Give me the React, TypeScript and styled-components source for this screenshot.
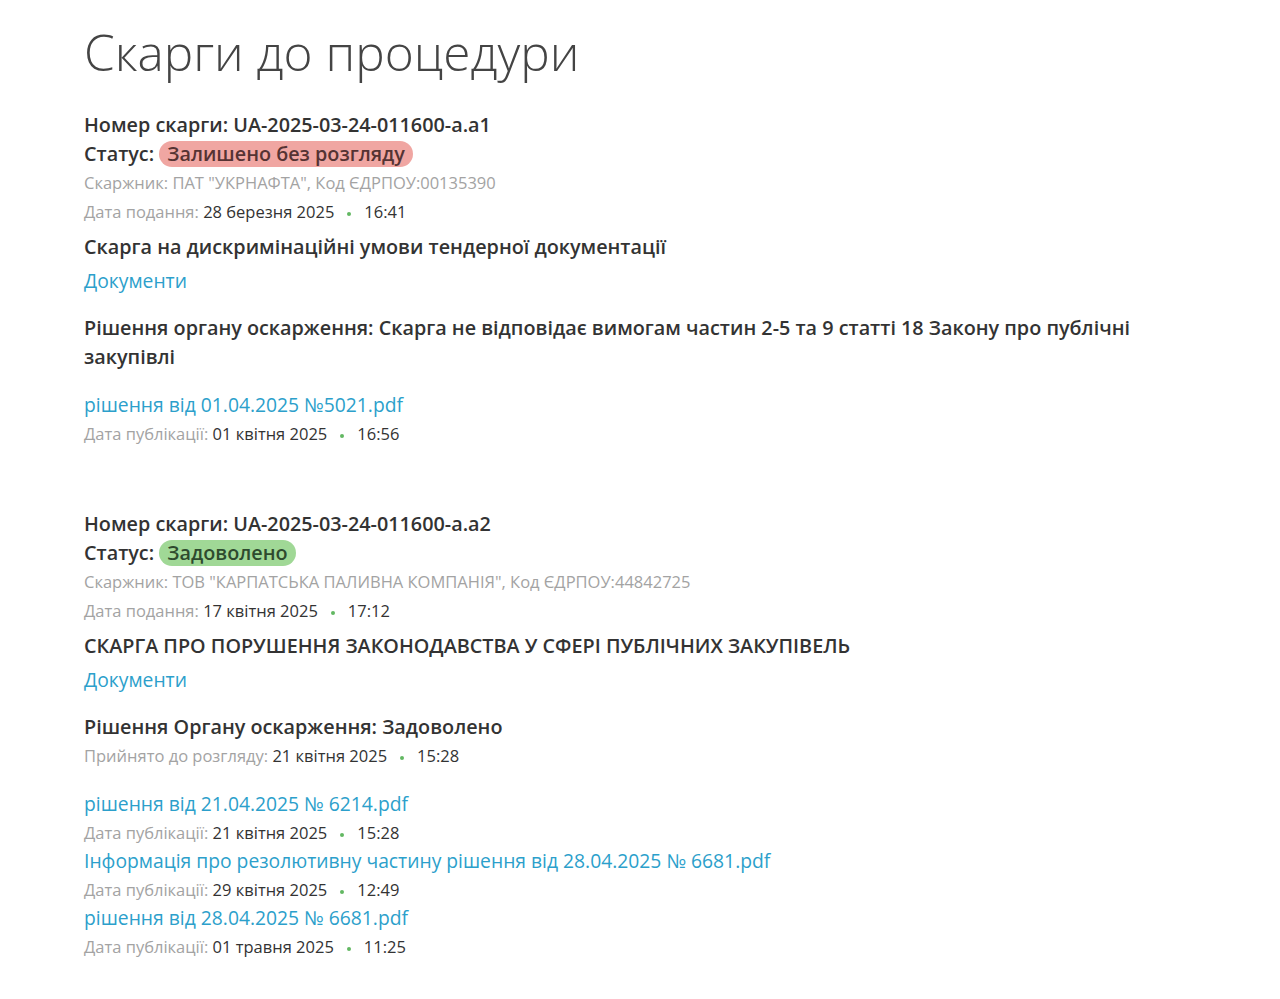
import styled, { createGlobalStyle } from 'styled-components';

const GlobalStyle = createGlobalStyle`
  body {
    margin: 0;
    background: #fff;
    font-family: 'Open Sans', 'Liberation Sans', sans-serif;
    color: #333;
  }
`;

const Page = styled.div`
  padding: 20px 84px 10px;
  max-width: 1090px;
`;

const Title = styled.h1`
  margin: 0 0 26px;
  font-size: 49.5px;
  font-weight: 300;
  line-height: 64px;
  color: #444;
`;

const Complaint = styled.section`
  margin-bottom: 61px;

  &:last-child {
    margin-bottom: 0;
  }
`;

const Heading = styled.div`
  font-size: 19.8px;
  font-weight: 600;
  line-height: 29px;
  color: #333;
`;

const Status = styled.span<{ tone: 'red' | 'green' }>`
  display: inline-block;
  padding: 0 8px;
  border-radius: 14px;
  line-height: 26px;
  background: ${(p) => (p.tone === 'red' ? '#f0a6a2' : '#a0d896')};
  color: ${(p) => (p.tone === 'red' ? '#553333' : '#2e4a2e')};
`;

const Meta = styled.div`
  font-size: 16.5px;
  line-height: 29px;
  color: #a3a3a3;
`;

const Value = styled.span`
  color: #333;
`;

const Dot = styled.span`
  display: inline-block;
  width: 4px;
  height: 4px;
  border-radius: 50%;
  background: #62b862;
  margin: 0 13px;
  vertical-align: middle;
`;

const Subject = styled(Heading)`
  margin-top: 6px;
`;

const Link = styled.a`
  display: block;
  font-size: 19.3px;
  line-height: 28px;
  color: #2c9fcb;
  text-decoration: none;
`;

const DocsLink = styled(Link)`
  margin-top: 6px;
`;

const Decision = styled(Heading)`
  margin-top: 18px;
`;

const Files = styled.div`
  margin-top: 20px;
`;

type FileItem = { name: string; date: string; time: string };

type ComplaintData = {
  number: string;
  status: string;
  tone: 'red' | 'green';
  complainant: string;
  filed: string;
  filedTime: string;
  subject: string;
  decision: string;
  accepted?: { date: string; time: string };
  files: FileItem[];
};

const complaints: ComplaintData[] = [
  {
    number: 'UA-2025-03-24-011600-a.a1',
    status: 'Залишено без розгляду',
    tone: 'red',
    complainant: 'ПАТ "УКРНАФТА", Код ЄДРПОУ:00135390',
    filed: '28 березня 2025',
    filedTime: '16:41',
    subject: 'Скарга на дискримінаційні умови тендерної документації',
    decision:
      'Рішення органу оскарження: Скарга не відповідає вимогам частин 2-5 та 9 статті 18 Закону про публічні закупівлі',
    files: [{ name: 'рішення від 01.04.2025 №5021.pdf', date: '01 квітня 2025', time: '16:56' }],
  },
  {
    number: 'UA-2025-03-24-011600-a.a2',
    status: 'Задоволено',
    tone: 'green',
    complainant: 'ТОВ "КАРПАТСЬКА ПАЛИВНА КОМПАНІЯ", Код ЄДРПОУ:44842725',
    filed: '17 квітня 2025',
    filedTime: '17:12',
    subject: 'СКАРГА ПРО ПОРУШЕННЯ ЗАКОНОДАВСТВА У СФЕРІ ПУБЛІЧНИХ ЗАКУПІВЕЛЬ',
    decision: 'Рішення Органу оскарження: Задоволено',
    accepted: { date: '21 квітня 2025', time: '15:28' },
    files: [
      { name: 'рішення від 21.04.2025 № 6214.pdf', date: '21 квітня 2025', time: '15:28' },
      {
        name: 'Інформація про резолютивну частину рішення від 28.04.2025 № 6681.pdf',
        date: '29 квітня 2025',
        time: '12:49',
      },
      { name: 'рішення від 28.04.2025 № 6681.pdf', date: '01 травня 2025', time: '11:25' },
    ],
  },
];

function DateLine({ label, date, time }: { label: string; date: string; time: string }) {
  return (
    <Meta>
      {label}: <Value>{date}</Value>
      <Dot />
      <Value>{time}</Value>
    </Meta>
  );
}

export default function App() {
  return (
    <>
      <GlobalStyle />
      <Page>
        <Title>Скарги до процедури</Title>
        {complaints.map((c) => (
          <Complaint key={c.number}>
            <Heading>Номер скарги: {c.number}</Heading>
            <Heading>
              Статус: <Status tone={c.tone}>{c.status}</Status>
            </Heading>
            <Meta>Скаржник: {c.complainant}</Meta>
            <DateLine label="Дата подання" date={c.filed} time={c.filedTime} />
            <Subject>{c.subject}</Subject>
            <DocsLink href="#">Документи</DocsLink>
            <Decision>{c.decision}</Decision>
            {c.accepted && (
              <DateLine label="Прийнято до розгляду" date={c.accepted.date} time={c.accepted.time} />
            )}
            <Files>
              {c.files.map((f) => (
                <div key={f.name}>
                  <Link href="#">{f.name}</Link>
                  <DateLine label="Дата публікації" date={f.date} time={f.time} />
                </div>
              ))}
            </Files>
          </Complaint>
        ))}
      </Page>
    </>
  );
}
